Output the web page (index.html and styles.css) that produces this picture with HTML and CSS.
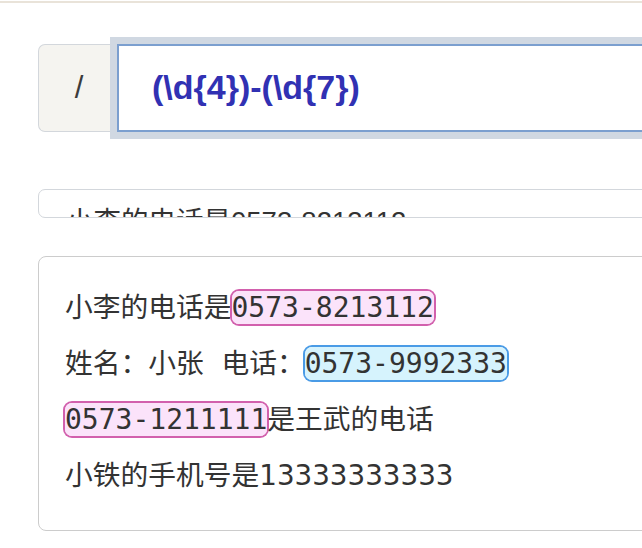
FILE: index.html
```html
<!DOCTYPE html>
<html lang="zh">
<head>
<meta charset="utf-8">
<title>Regex tester</title>
<link rel="stylesheet" href="styles.css">
</head>
<body>
<div class="topline"></div>
<main class="page">
  <div class="regex-row">
    <div class="prefix">/</div>
    <div class="regex-input">(\d{4})-(\d{7})</div>
  </div>
  <div class="source">小李的电话是0573-8213112</div>
  <div class="result">
    <p class="line">小李的电话是<span class="m m-pink">0573-8213112</span></p>
    <p class="line">姓名：小张  电话：<span class="m m-blue">0573-9992333</span></p>
    <p class="line"><span class="m m-pink">0573-1211111</span>是王武的电话</p>
    <p class="line">小铁的手机号是13333333333</p>
  </div>
</main>
</body>
</html>
```
FILE: styles.css
```css
html, body {
  margin: 0;
  padding: 0;
  background: #ffffff;
  overflow: hidden;
}
body {
  font-family: "DejaVu Sans", "Noto Sans CJK SC", sans-serif;
  color: #333333;
}
.topline {
  height: 2px;
  margin-top: 1px;
  background: #e9e3d9;
}
.page {
  width: 760px;
  padding: 41px 0 0 38px;
}
.regex-row {
  display: flex;
  height: 88px;
}
.prefix {
  width: 79px;
  box-sizing: border-box;
  flex: none;
  display: flex;
  align-items: center;
  justify-content: center;
  padding-left: 2px;
  background: #f5f4f0;
  border: 1.5px solid #d3d7dc;
  border-right: none;
  border-radius: 7px 0 0 7px;
  font-family: "Liberation Sans", sans-serif;
  font-size: 31px;
  color: #3c3c3c;
}
.regex-input {
  flex: 1;
  box-sizing: border-box;
  border: 2px solid #7b9fcf;
  box-shadow: 0 0 0 7px #d0d8e2;
  background: #ffffff;
  display: flex;
  align-items: center;
  padding: 0 0 2px 33px;
  font-family: "Liberation Sans", sans-serif;
  font-weight: bold;
  font-size: 34px;
  color: #3131b3;
}
.source {
  margin-top: 57px;
  height: 29px;
  box-sizing: border-box;
  border: 1.5px solid #d3d7dc;
  border-radius: 7px;
  padding: 18px 0 0 27px;
  overflow: hidden;
  font-family: "Liberation Sans", "Noto Sans CJK SC", sans-serif;
  font-size: 27.5px;
  line-height: 28px;
  color: #333333;
}
.result {
  margin-top: 38px;
  box-sizing: border-box;
  height: 275px;
  border: 1.5px solid #cccccc;
  border-radius: 8px;
  padding: 23px 0 0 26px;
}
.line {
  margin: 0;
  font-size: 27.75px;
  line-height: 56px;
  white-space: pre;
}
.m {
  font-family: "DejaVu Sans Mono", monospace;
  font-size: 28px;
  border-radius: 7px;
}
.m-pink {
  background: #fbe3fa;
  box-shadow: 0 0 0 2px #d260ad;
}
.m-blue {
  background: #d6f3fd;
  box-shadow: 0 0 0 2px #4a9be6;
}
```
